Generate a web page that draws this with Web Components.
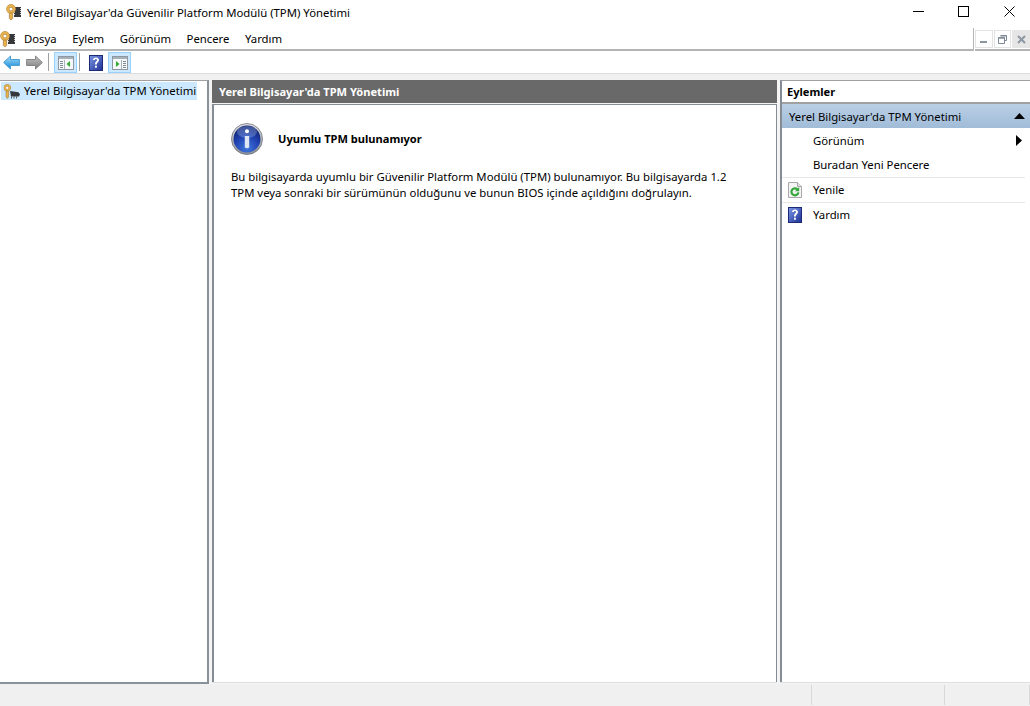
<!DOCTYPE html>
<html lang="tr">
<head>
<meta charset="utf-8">
<title>TPM Yönetimi</title>
<style>
  html, body { margin: 0; height: 100%; overflow: hidden; background: #fff; }
  body { font: 11.33px "Noto Sans", sans-serif; color: #000; }
</style>
</head>
<body>
<mmc-window>
  <mmc-titlebar slot="title">Yerel Bilgisayar'da Güvenilir Platform Modülü (TPM) Yönetimi</mmc-titlebar>
  <mmc-menubar slot="menu"></mmc-menubar>
  <mmc-toolbar slot="tools"></mmc-toolbar>
  <mmc-tree slot="tree">Yerel Bilgisayar'da TPM Yönetimi</mmc-tree>
  <mmc-center slot="center" heading="Yerel Bilgisayar'da TPM Yönetimi"></mmc-center>
  <mmc-actions slot="actions"></mmc-actions>
  <mmc-status slot="status"></mmc-status>
</mmc-window>

<script>
const icons = {
  key: `<svg width="15" height="16" viewBox="0 0 15 16">
      <rect x="8" y="3" width="7" height="10" fill="#37383a"/>
      <path d="M8 4h1v1H8zM8 6h1v1H8zM8 8h1v1H8zM8 10h1v1H8zM14 4h1v1h-1zM14 6h1v1h-1zM14 8h1v1h-1zM14 10h1v1h-1z" fill="#c9c9c9"/>
      <circle cx="5" cy="5" r="4.700" fill="#9a7431"/>
      <circle cx="5" cy="5" r="3.200" fill="none" stroke="#e6b04e" stroke-width="2.600"/>
      <circle cx="5" cy="5" r="1.600" fill="#fff"/>
      <path d="M3.300 9h3.400v5.500L5 16l-1.700-1.500z" fill="#e6b04e" stroke="#9a7431" stroke-width=".6"/>
    </svg>`,
  treekey: `<svg width="17" height="15" viewBox="0 0 17 15">
      <path d="M7 7l8.500 1.200 1.500 2-1 2.300H8z" fill="#33373c"/>
      <path d="M8.500 12.500v2M11 12.500v2M13.500 12.500v2" stroke="#555"/>
      <circle cx="4.300" cy="3.800" r="3.500" fill="#95702c"/>
      <circle cx="4.300" cy="3.800" r="2.400" fill="none" stroke="#e6b04e" stroke-width="1.900"/>
      <circle cx="4.300" cy="3.800" r="1.200" fill="#fff"/>
      <path d="M3 7h2.600v6L4.300 14.500 3 13z" fill="#e6b04e" stroke="#95702c" stroke-width=".5"/>
    </svg>`,
  back: `<svg width="17" height="15" viewBox="0 0 17 15">
      <defs><linearGradient id="b" x1="0" y1="0" x2="0" y2="1"><stop offset="0" stop-color="#a9e0fb"/><stop offset="1" stop-color="#0f86d6"/></linearGradient></defs>
      <path d="M.6 7.500 7.500 1v3.500h8.900v6H7.500V14z" fill="url(#b)" stroke="#4a9ed2"/>
    </svg>`,
  forward: `<svg width="17" height="15" viewBox="0 0 17 15">
      <defs><linearGradient id="f" x1="0" y1="0" x2="0" y2="1"><stop offset="0" stop-color="#c4c4c4"/><stop offset="1" stop-color="#7c7c7c"/></linearGradient></defs>
      <path d="M16.400 7.500 9.500 1v3.500H.6v6h8.900V14z" fill="url(#f)" stroke="#858585"/>
    </svg>`,
  paneleft: `<svg width="16" height="14" viewBox="0 0 16 14">
      <rect x=".5" y=".5" width="15" height="13" fill="#f6f8fa" stroke="#8d98a2"/>
      <rect x="1" y="1" width="14" height="2" fill="#a6b0b9"/>
      <path d="M2 5.500h3M2 7.500h3M2 9.500h3M2 11.500h3" stroke="#7f8c98"/>
      <path d="M6.500 4v9" stroke="#a9b4bd"/>
      <path d="M12 5v6L8.500 8z" fill="#35a835"/>
    </svg>`,
  paneright: `<svg width="16" height="14" viewBox="0 0 16 14">
      <rect x=".5" y=".5" width="15" height="13" fill="#f6f8fa" stroke="#8d98a2"/>
      <rect x="1" y="1" width="14" height="2" fill="#a6b0b9"/>
      <path d="M11 5.500h3M11 7.500h3M11 9.500h3M11 11.500h3" stroke="#7f8c98"/>
      <path d="M9.500 4v9" stroke="#a9b4bd"/>
      <path d="M4 5v6L7.500 8z" fill="#35a835"/>
    </svg>`,
  help: `<svg width="14" height="16" viewBox="0 0 14 16">
      <defs><linearGradient id="h" x1="0" y1="0" x2="1" y2="1"><stop offset="0" stop-color="#7c98e6"/><stop offset="1" stop-color="#1d2f94"/></linearGradient></defs>
      <rect x=".5" y=".5" width="13" height="15" fill="url(#h)" stroke="#1c2a78"/>
      <path d="M4 5C4 3.200 5.500 2.400 7 2.400S10 3.300 10 5c0 2.200-2.200 2.300-2.200 4.500H6c0-3 2-3 2-4.400 0-.7-.4-1.100-1-1.100-.7 0-1.100.4-1.100 1.100z" fill="#fff"/>
      <rect x="6" y="10.700" width="1.900" height="2" fill="#fff"/>
    </svg>`,
  refresh: `<svg width="14" height="16" viewBox="0 0 14 16">
      <path d="M.5.500h9l4 4v11H.5z" fill="#f4f4f4" stroke="#a8a8a8"/>
      <path d="M9.500.500v4h4" fill="#e4e4e4" stroke="#a8a8a8"/>
      <path d="M10.400 10.300a3.500 3.500 0 1 1-1-3" fill="none" stroke="#35a83b" stroke-width="2.200"/>
      <path d="M11.200 5v4.200H7z" fill="#35a83b"/>
    </svg>`,
  info: `<svg width="32" height="32" viewBox="0 0 32 32">
      <defs>
        <radialGradient id="i" cx=".5" cy=".85" r=".8"><stop offset="0" stop-color="#3f78dd"/><stop offset=".6" stop-color="#1f3fae"/><stop offset="1" stop-color="#12236f"/></radialGradient>
        <linearGradient id="r" x1="0" y1="0" x2="0" y2="1"><stop offset="0" stop-color="#e2e2e2"/><stop offset="1" stop-color="#8b8f96"/></linearGradient>
      </defs>
      <circle cx="16" cy="16" r="15.500" fill="url(#r)" stroke="#6e7480" stroke-width=".8"/>
      <circle cx="16" cy="16" r="13.500" fill="url(#i)"/>
      <ellipse cx="16" cy="9" rx="10" ry="6" fill="#9db9ee" opacity=".35"/>
      <circle cx="16" cy="8.300" r="2" fill="#fff"/>
      <path d="M13.800 13h4.400v11.500q-2.200 1.600-4.400 0z" fill="#dfe7f4"/>
    </svg>`
}

// small helper so every element does not repeat the shadow setup
class ShadowEl extends HTMLElement {
  render(html) {
    this.attachShadow({ mode: 'open' }).innerHTML = html
  }
}

customElements.define('mmc-icon', class extends ShadowEl {
  connectedCallback() {
    if (this.shadowRoot) return
    this.render(`<style>:host { display: inline-flex; flex: none; }</style>${icons[this.getAttribute('name')]}`)
  }
})

customElements.define('mmc-window', class extends ShadowEl {
  constructor() {
    super()
    this.render(`
      <style>
        :host { display: flex; flex-direction: column; height: 706px; overflow: hidden; }
        .gap { height: 6px; background: #f0f0f0; border-top: 1px solid #dcdcdc; flex: none; }
        .panes { flex: 1; min-height: 0; display: grid; grid-template-columns: 209px 3px 565px 3px 1fr; background: #f4f4f4; }
      </style>
      <slot name="title"></slot>
      <slot name="menu"></slot>
      <slot name="tools"></slot>
      <div class="gap"></div>
      <div class="panes">
        <slot name="tree"></slot>
        <i></i>
        <slot name="center"></slot>
        <i></i>
        <slot name="actions"></slot>
      </div>
      <slot name="status"></slot>
    `)
  }
})

customElements.define('mmc-titlebar', class extends ShadowEl {
  constructor() {
    super()
    this.render(`
      <style>
        :host { display: flex; align-items: center; height: 28px; flex: none; background: #fff; padding-left: 6px; }
        mmc-icon { margin-top: -4px; }
        .text { margin-left: 6px; margin-top: -4px; white-space: nowrap; flex: 1; }
        .btn { width: 46px; height: 28px; flex: none; display: flex; align-items: center; justify-content: center; margin-top: -6px; }
      </style>
      <mmc-icon name="key"></mmc-icon>
      <span class="text"><slot></slot></span>
      <div class="btn" style="margin-right: -1px"><svg width="11" height="11"><path d="M0 5.500h11" stroke="#000"/></svg></div>
      <div class="btn"><svg width="11" height="11"><rect x=".5" y=".5" width="10" height="10" fill="none" stroke="#000"/></svg></div>
      <div class="btn" style="margin-right: -2px"><svg width="11" height="11"><path d="M.5.500l10 10M10.500.500l-10 10" stroke="#000"/></svg></div>
    `)
  }
})

customElements.define('mmc-menubar', class extends ShadowEl {
  constructor() {
    super()
    this.render(`
      <style>
        :host { display: flex; height: 23px; flex: none; background: #fff; }
        .menu { flex: 1; display: flex; align-items: center; border-bottom: 2px solid #b4b4b4; border-right: 1px solid #b4b4b4; margin-right: 1px; }
        .menu mmc-icon { margin-right: 9px; }
        .menu span { margin-right: 15.5px; }
        .mdi { display: flex; gap: 1px; padding: 2px 0 0; width: 55px; border-bottom: 2px solid #b4b4b4; box-sizing: border-box; }
        .mdi div { width: 18px; height: 18px; box-sizing: border-box; border: 1px solid #e3e3e3; display: flex; align-items: center; justify-content: center; background: #fff; }
        .mdi div.off { background: #e6e6e6; border-color: #e6e6e6; }
      </style>
      <div class="menu">
        <mmc-icon name="key"></mmc-icon>
        <span>Dosya</span><span>Eylem</span><span>Görünüm</span><span>Pencere</span><span>Yardım</span>
      </div>
      <div class="mdi">
        <div><svg width="9" height="9"><rect x="1" y="6" width="7" height="2" fill="#8c97a3"/></svg></div>
        <div><svg width="9" height="9"><path d="M2.500.5h6v5h-1.500M.5 2.500h6v6h-6z" fill="none" stroke="#7d8894"/><path d="M.5 3.200h6M2.500 1h6" stroke="#7d8894"/></svg></div>
        <div class="off"><svg width="9" height="9"><path d="M1 1l7 7M8 1 1 8" stroke="#8c97a3" stroke-width="2"/></svg></div>
      </div>
    `)
  }
})

customElements.define('mmc-toolbar', class extends ShadowEl {
  constructor() {
    super()
    this.render(`
      <style>
        :host { display: flex; align-items: flex-end; height: 22px; flex: none; background: #fff; }
        .b { width: 23px; height: 21px; display: flex; align-items: center; justify-content: center; box-sizing: border-box; }
        .on { background: #cce8ff; border: 1px solid #99d1ff; }
        .sep { width: 1px; height: 18px; background: #a0a0a0; margin: 0 0 2px 2px; }
      </style>
      <div class="b"><mmc-icon name="back"></mmc-icon></div>
      <div class="b"><mmc-icon name="forward"></mmc-icon></div>
      <div class="sep"></div>
      <div class="b on" style="margin-left: 5px"><mmc-icon name="paneleft"></mmc-icon></div>
      <div class="sep"></div>
      <div class="b" style="margin-left: 4px"><mmc-icon name="help"></mmc-icon></div>
      <div class="b on" style="margin-left: 1px"><mmc-icon name="paneright"></mmc-icon></div>
    `)
  }
})

customElements.define('mmc-tree', class extends ShadowEl {
  constructor() {
    super()
    this.render(`
      <style>
        :host { display: block; background: #fff; border-top: 1px solid #a0a0a0; border-right: 2px solid #8a9299; border-bottom: 2px solid #8a9299; box-sizing: border-box; padding: 1px 0 0 1px; min-height: 0; }
        .row { display: inline-flex; align-items: center; height: 18px; width: 196px; background: #cce8ff; white-space: nowrap; }
        mmc-icon { margin: 0 4px 0 2px; }
        span { margin-top: -2px; }
      </style>
      <div class="row"><mmc-icon name="treekey"></mmc-icon><span><slot></slot></span></div>
    `)
  }
})

customElements.define('mmc-center', class extends ShadowEl {
  connectedCallback() {
    if (this.shadowRoot) return
    this.render(`
      <style>
        :host { display: flex; flex-direction: column; min-height: 0; }
        .head { height: 23px; background: #696969; color: #fff; font-weight: 700; font-size: 11.1px; display: flex; align-items: center; padding-left: 7px; flex: none; margin-bottom: 1px; }
        .body { flex: 1; background: #fff; border-left: 2px solid #858c93; border-top: 1px solid #858c93; border-right: 1px solid #858c93; padding: 18px 0 0 17px; margin-bottom: 2px; box-shadow: 0 1px 0 #dedede; }
        .msg { display: flex; align-items: center; gap: 15px; font-weight: 700; font-size: 11.1px; }
        .msg span { margin-top: -2px; }
        p { margin: 14px 0 0; width: 500px; line-height: 16px; }
      </style>
      <div class="head">${this.getAttribute('heading')}</div>
      <div class="body">
        <div class="msg"><mmc-icon name="info"></mmc-icon><span>Uyumlu TPM bulunamıyor</span></div>
        <p>Bu bilgisayarda uyumlu bir Güvenilir Platform Modülü (TPM) bulunamıyor. Bu bilgisayarda 1.2 TPM veya sonraki bir sürümünün olduğunu ve bunun BIOS içinde açıldığını doğrulayın.</p>
      </div>
    `)
  }
})

customElements.define('mmc-actions', class extends ShadowEl {
  constructor() {
    super()
    this.render(`
      <style>
        :host { display: flex; flex-direction: column; min-height: 0; background: #fff; border-left: 2px solid #858c93; border-top: 1px solid #a0a0a0; margin-bottom: 2px; box-shadow: 0 1px 0 #dedede; }
        .head { height: 21px; font-weight: 700; font-size: 11.1px; display: flex; align-items: center; padding-left: 5px; border-bottom: 2px solid #a0a0a0; flex: none; }
        .group { height: 24px; display: flex; align-items: center; justify-content: space-between; padding: 0 5px 0 7px; background: linear-gradient(#b9cfe5, #a1bcd8); flex: none; }
        .row { height: 24px; display: flex; align-items: center; margin-right: 5px; position: relative; padding-left: 31px; flex: none; }
        .row.tall { padding-bottom: 1px; }
        .row.line { border-top: 1px solid #e8e8e8; height: 23px; padding-bottom: 1px; }
        .row mmc-icon { position: absolute; left: 6px; }
        .row svg { position: absolute; right: 3px; }
      </style>
      <div class="head">Eylemler</div>
      <div class="group"><span>Yerel Bilgisayar'da TPM Yönetimi</span>
        <svg width="11" height="6"><path d="M5.500 0 11 6H0z"/></svg></div>
      <div class="row">Görünüm<svg width="6" height="11"><path d="M0 0l6 5.500L0 11z"/></svg></div>
      <div class="row tall">Buradan Yeni Pencere</div>
      <div class="row line"><mmc-icon name="refresh"></mmc-icon>Yenile</div>
      <div class="row line"><mmc-icon name="help"></mmc-icon>Yardım</div>
    `)
  }
})

customElements.define('mmc-status', class extends ShadowEl {
  constructor() {
    super()
    this.render(`
      <style>
        :host { display: flex; height: 22px; flex: none; background: #f0f0f0; box-sizing: border-box; padding-top: 1px; }
        div { border-right: 1px solid #d9d9d9; height: 20px; }
        .a { width: 811px; } .b { width: 132px; } .c { flex: 1; }
      </style>
      <div class="a"></div><div class="b"></div><div class="c"></div>
    `)
  }
})
</script>
</body>
</html>
